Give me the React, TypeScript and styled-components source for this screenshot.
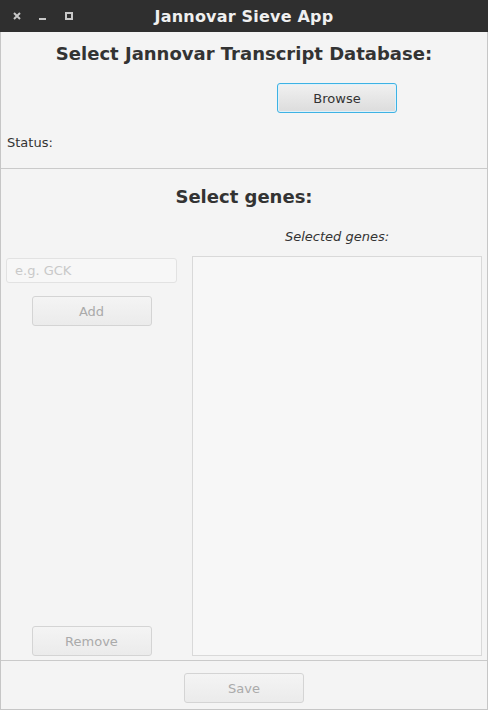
import * as React from 'react';
import styled, { createGlobalStyle } from 'styled-components';

const GlobalStyle = createGlobalStyle`
  html, body {
    margin: 0;
    padding: 0;
    background: #f4f4f4;
  }
  body {
    font-family: "DejaVu Sans", "Liberation Sans", sans-serif;
    color: #333333;
  }
  * {
    box-sizing: border-box;
  }
`;

const Window = styled.div`
  width: 488px;
  height: 710px;
  display: flex;
  flex-direction: column;
  background: #f4f4f4;
  border: 1px solid #c6c6c6;
  border-top: none;
`;

const TitleBar = styled.div`
  height: 32px;
  margin: 0 -1px;
  background: #2f2f2f;
  display: grid;
  grid-template-columns: 1fr auto 1fr;
  align-items: center;
`;

const Controls = styled.div`
  display: flex;
  align-items: center;
  gap: 14px;
  padding-left: 11px;
`;

const ControlIcon = styled.svg`
  width: 12px;
  height: 12px;
  display: block;
`;

const TitleText = styled.div`
  color: #f0f0f0;
  font-weight: bold;
  font-size: 16px;
  letter-spacing: 0.2px;
`;

const DbSection = styled.section`
  display: flex;
  flex-direction: column;
  padding: 11px 6px 0;
  height: 137px;
  border-bottom: 1px solid #cacaca;
`;

const Heading = styled.h2`
  margin: 0;
  text-align: center;
  font-size: 18px;
  line-height: 22px;
  font-weight: bold;
  color: #333333;
`;

const BrowseRow = styled.div`
  display: flex;
  padding-left: 270px;
  margin-top: 18px;
`;

const Button = styled.button<{ $focused?: boolean }>`
  width: 120px;
  height: 30px;
  font-family: inherit;
  font-size: 13px;
  border-radius: 3px;
  cursor: pointer;
  color: ${({ disabled }) => (disabled ? '#aaaaaa' : '#333333')};
  border: 1px solid ${({ $focused, disabled }) => ($focused ? '#3db2e4' : disabled ? '#d4d4d4' : '#b8b8b8')};
  box-shadow: ${({ $focused }) => ($focused ? 'inset 0 0 0 1px #dff1fa' : 'none')};
  background: ${({ disabled }) =>
    disabled
      ? 'linear-gradient(#f4f4f4, #ebebeb)'
      : 'linear-gradient(#f1f1f1, #dcdcdc)'};
  padding: 0;
`;

const StatusLabel = styled.div`
  margin-top: 22px;
  font-size: 13px;
  line-height: 16px;
`;

const GenesSection = styled.section`
  flex: 1;
  display: flex;
  flex-direction: column;
  padding: 17px 5px 4px 5px;
  border-bottom: 1px solid #cacaca;
`;

const GenesGrid = styled.div`
  flex: 1;
  display: grid;
  grid-template-columns: 171px 290px;
  grid-template-rows: auto 1fr;
  column-gap: 15px;
  margin-top: 21px;
`;

const ListLabel = styled.div`
  grid-column: 2;
  text-align: center;
  font-style: italic;
  font-size: 13px;
  line-height: 16px;
  margin-bottom: 11px;
`;

const LeftColumn = styled.div`
  grid-column: 1;
  grid-row: 2;
  display: flex;
  flex-direction: column;
  align-items: center;
  padding-top: 2px;
`;

const GeneInput = styled.input`
  width: 100%;
  height: 25px;
  border: 1px solid #e2e2e2;
  border-radius: 3px;
  background: #f7f7f7;
  font-family: inherit;
  font-size: 13px;
  padding: 0 8px;
  color: #333333;
  outline: none;

  &::placeholder {
    color: #c9c9c9;
  }
`;

const AddWrap = styled.div`
  margin-top: 13px;
  flex: 1;
`;

const GeneList = styled.div`
  grid-column: 2;
  grid-row: 2;
  background: #f7f7f7;
  border: 1px solid #d9d9d9;
`;

const Footer = styled.footer`
  height: 48px;
  display: flex;
  justify-content: center;
  align-items: flex-start;
  padding-top: 12px;
`;

const App = (): JSX.Element => (
  <>
    <GlobalStyle />
    <Window>
      <TitleBar>
        <Controls>
          <ControlIcon viewBox="0 0 12 12">
            <path d="M3 3 L9 9 M9 3 L3 9" stroke="#c8c8c8" strokeWidth="2" />
          </ControlIcon>
          <ControlIcon viewBox="0 0 12 12">
            <rect x="2" y="8" width="7" height="2" fill="#c8c8c8" />
          </ControlIcon>
          <ControlIcon viewBox="0 0 12 12">
            <rect x="3" y="3" width="6" height="6" fill="none" stroke="#c8c8c8" strokeWidth="2" />
          </ControlIcon>
        </Controls>
        <TitleText>Jannovar Sieve App</TitleText>
        <div />
      </TitleBar>
      <DbSection>
        <Heading>Select Jannovar Transcript Database:</Heading>
        <BrowseRow>
          <Button $focused>Browse</Button>
        </BrowseRow>
        <StatusLabel>Status:</StatusLabel>
      </DbSection>
      <GenesSection>
        <Heading>Select genes:</Heading>
        <GenesGrid>
          <ListLabel>Selected genes:</ListLabel>
          <LeftColumn>
            <GeneInput placeholder="e.g. GCK" disabled />
            <AddWrap>
              <Button disabled>Add</Button>
            </AddWrap>
            <Button disabled>Remove</Button>
          </LeftColumn>
          <GeneList />
        </GenesGrid>
      </GenesSection>
      <Footer>
        <Button disabled>Save</Button>
      </Footer>
    </Window>
  </>
);

export default App;
